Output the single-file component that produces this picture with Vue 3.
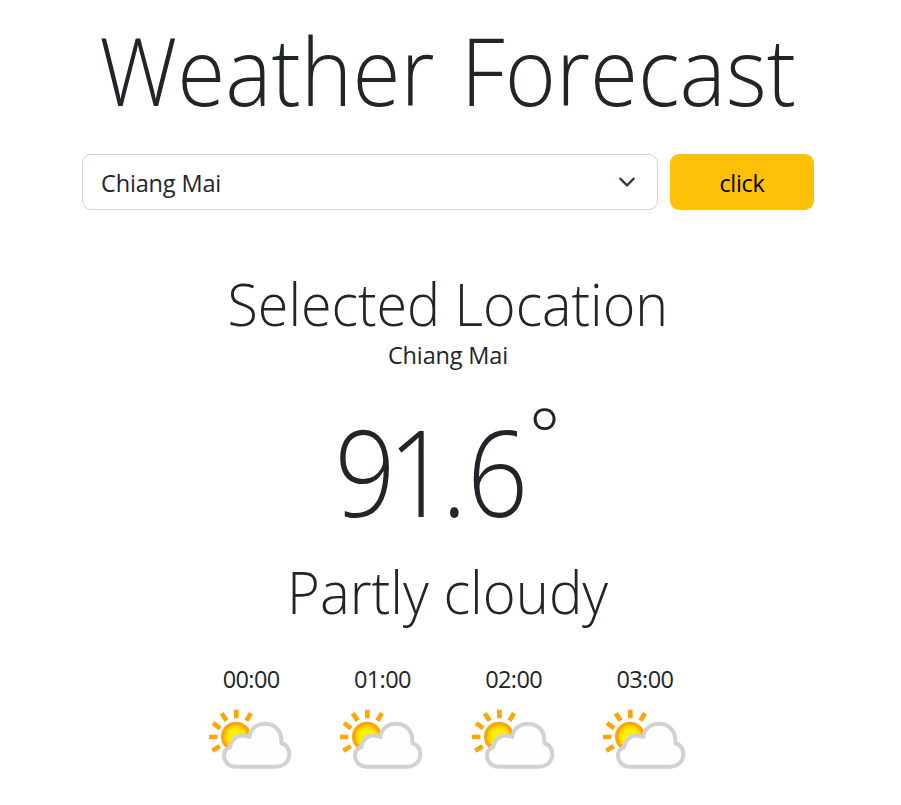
<script setup>
import { ref } from 'vue'

const cities = ['Chiang Mai']
const selected = ref(cities[0])
const hours = ['00:00', '01:00', '02:00', '03:00']
</script>

<template>
  <main class="page">
    <h1 class="title">Weather Forecast</h1>

    <div class="controls">
      <div class="select">
        <span class="value">{{ selected }}</span>
        <svg class="chevron" viewBox="0 0 16 16" width="18" height="18">
          <path d="m2 5 6 6 6-6" fill="none" stroke="#343a40" stroke-width="2" stroke-linecap="round" stroke-linejoin="round" />
        </svg>
      </div>
      <button class="btn" type="button"><span>click</span></button>
    </div>

    <h2 class="heading location">Selected Location</h2>
    <p class="city">{{ selected }}</p>
    <p class="temp"><span class="num"><span class="whole">91</span>.6</span><span class="deg">°</span></p>
    <h2 class="heading condition">Partly cloudy</h2>

    <div class="hours">
      <div v-for="hour in hours" :key="hour" class="hour">
        <span class="time">{{ hour }}</span>
        <svg class="icon" viewBox="39 90 288 288" width="96" height="96">
          <defs>
            <radialGradient id="sun" cx="50%" cy="52%" r="50%">
              <stop offset="0.55" stop-color="#ffee00" />
              <stop offset="0.95" stop-color="#ffc400" />
            </radialGradient>
          </defs>
          <g stroke="#ffa50a" stroke-width="14">
            <path d="M139 149v26M183 160l-14 22M95 160l15 22M69 189l21 16M57 231h25M67 272l22-13" />
          </g>
          <circle cx="138" cy="230" r="40" fill="url(#sun)" stroke="#ffa50a" stroke-width="10" />
          <path
            d="M137 320C115 320 102 304 102 286C102 273 109 265 121 261C123 240 141 225 162 227Q169 227 178 231C181 207 201 191 224 191C253 191 274 211 274 240V249C289 254 298 267 298 283C298 304 281 320 260 320Z"
            fill="#fefefe" stroke="#d0d2d4" stroke-width="12" stroke-linejoin="round"
          />
        </svg>
      </div>
    </div>
  </main>
</template>

<style>
body {
  margin: 0;
  background: #fff;
}
</style>

<style scoped>
.page {
  box-sizing: border-box;
  width: 896px;
  height: 805px;
  padding: 0 82px;
  overflow: hidden;
  display: flex;
  flex-direction: column;
  align-items: center;
  color: #212529;
  font-family: "Segoe UI", "Open Sans", "Noto Sans", sans-serif;
  font-size: 23.5px;
  letter-spacing: -0.15px;
}

h1, h2, p {
  margin: 0;
  white-space: nowrap;
}

.title {
  height: 154px;
  font-size: 94px;
  font-weight: 300;
  line-height: 141px;
  letter-spacing: 0;
  word-spacing: 4px;
  transform: scaleX(0.93);
}

.controls {
  display: flex;
  gap: 12px;
  width: 732px;
  height: 56px;
  flex: none;
}

.select {
  box-sizing: border-box;
  width: 576px;
  padding: 0 21px 0 18px;
  border: 1px solid #ced4da;
  border-radius: 9px;
  display: flex;
  align-items: center;
  justify-content: space-between;
}

.value {
  padding-top: 2px;
  line-height: 36px;
}

.btn {
  width: 144px;
  padding: 2px 0 0;
  border: 0;
  border-radius: 9px;
  background: #ffc107;
  color: #000;
  font: inherit;
  letter-spacing: -0.3px;
}

.heading {
  font-size: 59px;
  font-weight: 300;
  line-height: 62px;
  letter-spacing: 0;
  transform: scaleX(0.942);
}

.location {
  margin-top: 62px;
}

.city {
  margin-top: 3px;
  line-height: 36px;
}

.temp {
  display: flex;
  height: 170px;
  margin-top: 13px;
  padding-right: 23px;
  font-size: 119px;
  font-weight: 300;
  line-height: 170px;
  letter-spacing: 0;
}

.num {
  transform: scaleX(0.9);
  transform-origin: right;
}

.whole {
  letter-spacing: -8.5px;
}

.deg {
  margin-left: 1px;
  font-size: 74px;
  font-weight: 350;
  line-height: 96px;
}

.condition {
  margin-top: 4px;
  transform: scaleX(0.952);
}

.hours {
  display: grid;
  grid-template-columns: repeat(4, 131.25px);
  margin-top: 39px;
}

.hour {
  display: flex;
  flex-direction: column;
  align-items: center;
}

.time {
  height: 29px;
  line-height: 36px;
  letter-spacing: -0.6px;
}
</style>
